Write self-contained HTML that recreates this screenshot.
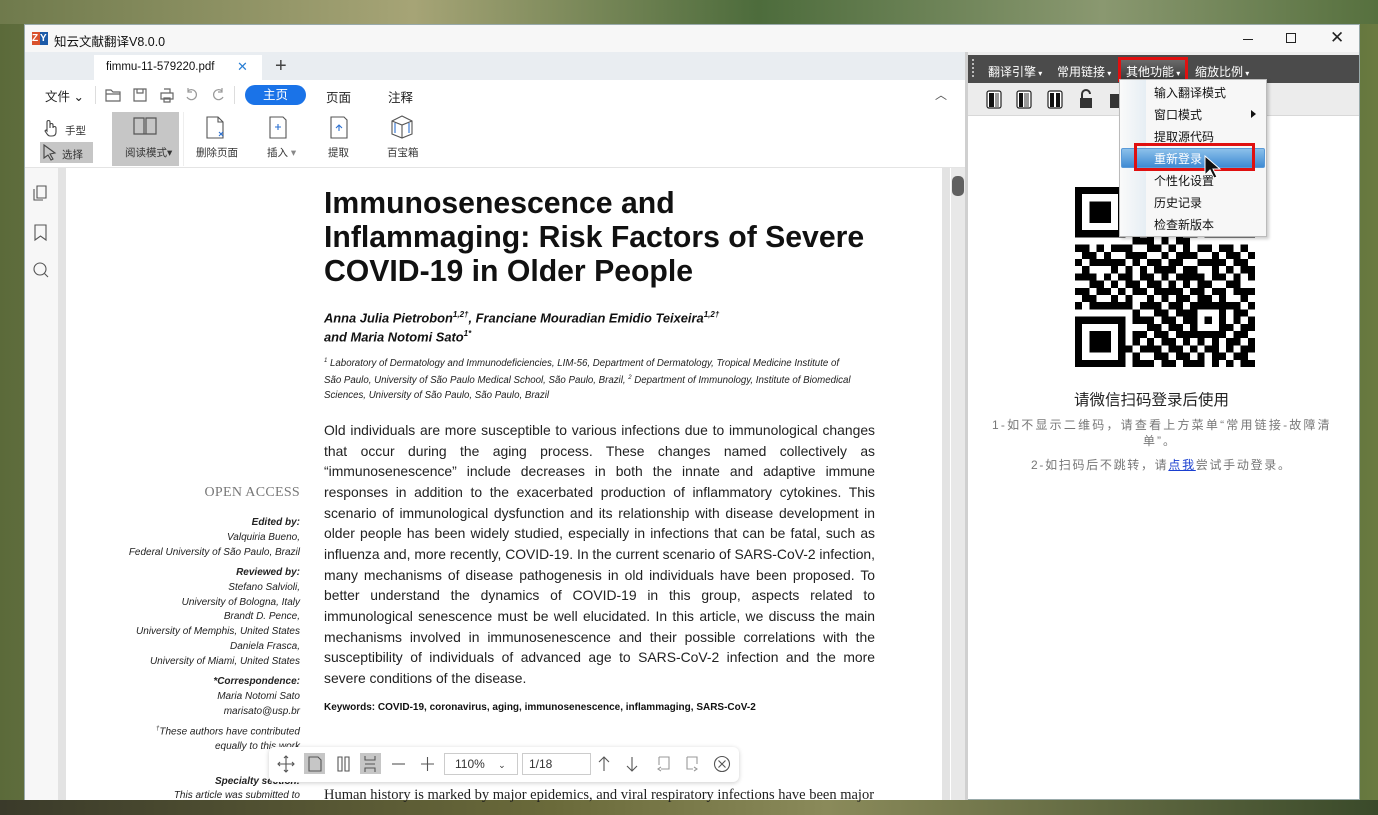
<!DOCTYPE html>
<html><head><meta charset="utf-8">
<style>
*{margin:0;padding:0;box-sizing:border-box}
body{width:1378px;height:815px;overflow:hidden;position:relative;font-family:"Liberation Sans","Noto Sans CJK SC",sans-serif;background:linear-gradient(90deg,#5b6a3a 0%,#8a8f5a 20%,#3d5a2e 45%,#7a8a4a 70%,#4a6a35 90%,#6a7a40 100%)}
.a{position:absolute}
.win{left:24px;top:24px;width:1336px;height:776px;background:#fff;border:1px solid #9aa}
.t{white-space:nowrap}
.body p{position:absolute;left:324px;width:551px;font-size:13.9px;color:#222;text-align:justify;text-align-last:justify;white-space:nowrap}
.side{position:absolute;right:1078px;font-size:10px;font-style:italic;color:#222;text-align:right;white-space:nowrap}
.menu div{position:absolute;left:1154px;font-size:12px;color:#111}
svg{position:absolute}
</style></head><body>
<div class="a" style="left:0;top:0;width:1378px;height:24px;background:linear-gradient(90deg,#6f7a4c,#a6a476 30%,#4d6c3c 55%,#8a9870 80%,#56703e)"></div>
<div class="a" style="left:0;top:800px;width:1378px;height:15px;background:linear-gradient(90deg,#3a3a2a,#6a6a3a 40%,#8a8a5a 60%,#3a4a2a)"></div>
<div class="a win"></div>
<div class="a" style="left:25px;top:25px;width:1334px;height:27px;background:#f7f7f7"></div>
<div class="a" style="left:32px;top:32px;width:8px;height:13px;background:#d9512c;color:#fff;font-size:10px;font-weight:bold;line-height:13px">Z</div>
<div class="a" style="left:40px;top:32px;width:8px;height:13px;background:#1b5aa8;color:#fff;font-size:10px;font-weight:bold;line-height:13px">Y</div>
<div class="a t" style="left:54px;top:31px;font-size:12.5px;color:#111">知云文献翻译V8.0.0</div>
<div class="a" style="left:1243px;top:39px;width:10px;height:1px;background:#222"></div>
<div class="a" style="left:1286px;top:33px;width:10px;height:10px;border:1px solid #222"></div>
<div class="a t" style="left:1330px;top:28px;font-size:17px;color:#222">✕</div>
<div class="a" style="left:25px;top:52px;width:940px;height:28px;background:#e9edf1"></div>
<div class="a" style="left:94px;top:55px;width:168px;height:25px;background:#fff"></div>
<div class="a t" style="left:106px;top:61px;font-size:11.5px;color:#111">fimmu-11-579220.pdf</div>
<div class="a t" style="left:237px;top:59px;font-size:13px;color:#2a7fd4">✕</div>
<div class="a t" style="left:275px;top:55px;font-size:20px;color:#444">+</div>
<div class="a t" style="left:45px;top:86px;font-size:12.5px;color:#222">文件 ⌄</div>
<div class="a" style="left:95px;top:86px;width:1px;height:18px;background:#ddd"></div>
<svg style="left:104px;top:86px" width="125" height="18" fill="none" stroke="#666" stroke-width="1.2">
<path d="M2 4h5l2 2h7v9H2z M2 8h14"/><path d="M30 3h12v12H30z M33 3v4h6V3"/><path d="M57 7h12v6H57z M60 3h6v4 M60 12h6v4h-6z"/><path d="M84 5a5 5 0 1 1 -1 6 M84 2v4h4" stroke="#999"/><path d="M118 5a5 5 0 1 0 1 6 M118 2v4h-4" stroke="#999"/></svg>
<div class="a" style="left:234px;top:86px;width:1px;height:18px;background:#ddd"></div>
<div class="a t" style="left:245px;top:85px;width:61px;height:20px;border-radius:10px;background:#1a73e8;color:#fff;font-size:12.5px;text-align:center;line-height:20px">主页</div>
<div class="a t" style="left:326px;top:87px;font-size:12.5px;color:#222">页面</div>
<div class="a t" style="left:388px;top:87px;font-size:12.5px;color:#222">注释</div>
<div class="a t" style="left:935px;top:86px;font-size:12px;color:#555">︿</div>
<svg style="left:42px;top:119px" width="18" height="18" fill="none" stroke="#444" stroke-width="1.1"><path d="M5 9V3a1.5 1.5 0 0 1 3 0v6V6a1.5 1.5 0 0 1 3 0v3a1.5 1.5 0 0 1 3 0v4c0 3-2 4-4 4H8c-2 0-3-2-5-5l1-1 1 1z"/></svg>
<div class="a t" style="left:65px;top:123px;font-size:10.5px;color:#333">手型</div>
<div class="a" style="left:40px;top:142px;width:53px;height:21px;background:#c6c6c6"></div>
<svg style="left:42px;top:144px" width="16" height="17" fill="none" stroke="#444" stroke-width="1.1"><path d="M2 1l11 8-5 1 3 5-2 1-3-5-4 3z"/></svg>
<div class="a t" style="left:62px;top:147px;font-size:10.5px;color:#333">选择</div>
<div class="a" style="left:112px;top:112px;width:67px;height:54px;background:#c6c6c6"></div>
<svg style="left:133px;top:116px" width="24" height="22" fill="none" stroke="#555" stroke-width="1.2"><path d="M1 2h10v16H1z M13 2h10v16H13z M11 18h2"/></svg>
<div class="a t" style="left:125px;top:145px;font-size:10.5px;color:#333">阅读模式▾</div>
<div class="a" style="left:183px;top:112px;width:1px;height:54px;background:#eee"></div>
<svg style="left:205px;top:116px" width="22" height="24" fill="none" stroke="#555" stroke-width="1.1"><path d="M2 1h11l5 5v16H2z M13 1v5h5"/><path d="M14 16l4 4M18 16l-4 4" stroke="#2a6fd0"/></svg>
<div class="a t" style="left:196px;top:145px;font-size:10.5px;color:#333">删除页面</div>
<svg style="left:268px;top:116px" width="22" height="24" fill="none" stroke="#555" stroke-width="1.1"><path d="M2 1h13l3 3v18H2z"/><path d="M10 8v6M7 11h6" stroke="#2a6fd0"/></svg>
<div class="a t" style="left:267px;top:145px;font-size:10.5px;color:#333">插入 <span style="color:#888">▾</span></div>
<svg style="left:329px;top:116px" width="22" height="24" fill="none" stroke="#555" stroke-width="1.1"><path d="M2 1h13l3 3v18H2z"/><path d="M10 15V9M7 12l3-3 3 3" stroke="#2a6fd0"/></svg>
<div class="a t" style="left:328px;top:145px;font-size:10.5px;color:#333">提取</div>
<svg style="left:389px;top:114px" width="26" height="26" fill="none" stroke="#555" stroke-width="1.1"><path d="M3 7l10-5 10 5v13l-10 4-10-4z M3 7l10 4 10-4 M13 11v13"/><path d="M6 9v10M20 9v10" stroke="#2a6fd0"/></svg>
<div class="a t" style="left:387px;top:145px;font-size:10.5px;color:#333">百宝箱</div>
<div class="a" style="left:25px;top:167px;width:940px;height:1px;background:#e4e4e4"></div>
<div class="a" style="left:25px;top:168px;width:33px;height:632px;background:#f7f7f7"></div>
<svg style="left:32px;top:185px" width="18" height="100" fill="none" stroke="#555" stroke-width="1.1"><path d="M5 1h9v12H5z M2 4v11h9"/><path d="M3 40h11v15l-5.5-4-5.5 4z"/><circle cx="8" cy="84" r="6"/><path d="M12.5 88.5l3.5 3.5"/></svg>
<div class="a" style="left:58px;top:168px;width:892px;height:632px;background:#e3e3e3"></div>
<div class="a" style="left:66px;top:168px;width:876px;height:632px;background:#fff"></div>
<div class="a" style="left:950px;top:168px;width:15px;height:632px;background:#e8e8e8;border-left:1px solid #fff"></div>
<div class="a" style="left:952px;top:176px;width:12px;height:20px;background:#606060;border-radius:5px"></div>
<div class="a" style="left:965px;top:52px;width:3px;height:748px;background:#d0d0d0"></div>
<div class="a" style="left:324px;top:187px;font-size:30.2px;font-weight:bold;line-height:34px;color:#111;white-space:nowrap">Immunosenescence and<br>Inflammaging: Risk Factors of Severe<br>COVID-19 in Older People</div>
<div class="a t" style="left:324px;top:307px;font-size:12.9px;font-weight:bold;font-style:italic;line-height:16px;color:#111">Anna Julia Pietrobon<sup style="font-size:8px">1,2†</sup>, Franciane Mouradian Emidio Teixeira<sup style="font-size:8px">1,2†</sup><br>and Maria Notomi Sato<sup style="font-size:8px">1*</sup></div>
<div class="a t" style="left:324px;top:354px;font-size:9.7px;font-style:italic;line-height:15px;color:#222"><sup style="font-size:6px">1</sup> Laboratory of Dermatology and Immunodeficiencies, LIM-56, Department of Dermatology, Tropical Medicine Institute of<br>São Paulo, University of São Paulo Medical School, São Paulo, Brazil, <sup style="font-size:6px">2</sup> Department of Immunology, Institute of Biomedical<br>Sciences, University of São Paulo, São Paulo, Brazil</div>
<div class="body">
<p style="top:422px">Old individuals are more susceptible to various infections due to immunological changes</p>
<p style="top:443px">that occur during the aging process. These changes named collectively as</p>
<p style="top:463px">“immunosenescence” include decreases in both the innate and adaptive immune</p>
<p style="top:484px">responses in addition to the exacerbated production of inflammatory cytokines. This</p>
<p style="top:505px">scenario of immunological dysfunction and its relationship with disease development in</p>
<p style="top:525px">older people has been widely studied, especially in infections that can be fatal, such as</p>
<p style="top:546px">influenza and, more recently, COVID-19. In the current scenario of SARS-CoV-2 infection,</p>
<p style="top:567px">many mechanisms of disease pathogenesis in old individuals have been proposed. To</p>
<p style="top:587px">better understand the dynamics of COVID-19 in this group, aspects related to</p>
<p style="top:608px">immunological senescence must be well elucidated. In this article, we discuss the main</p>
<p style="top:629px">mechanisms involved in immunosenescence and their possible correlations with the</p>
<p style="top:649px">susceptibility of individuals of advanced age to SARS-CoV-2 infection and the more</p>
<p style="top:670px;text-align-last:left">severe conditions of the disease.</p>
</div>
<div class="a t" style="left:324px;top:702px;font-size:10px;font-weight:bold;color:#111">Keywords: COVID-19, coronavirus, aging, immunosenescence, inflammaging, SARS-CoV-2</div>
<div class="a t" style="left:324px;top:787px;font-size:14.5px;font-family:'Liberation Serif',serif;color:#222">Human history is marked by major epidemics, and viral respiratory infections have been major</div>
<div class="a t" style="right:1078px;top:485px;font-size:14px;font-family:'Liberation Serif',serif;color:#777;letter-spacing:0.3px">OPEN ACCESS</div>
<div class="side" style="top:517px;font-weight:bold">Edited by:</div>
<div class="side" style="top:532px">Valquiria Bueno,</div>
<div class="side" style="top:547px">Federal University of São Paulo, Brazil</div>
<div class="side" style="top:567px;font-weight:bold">Reviewed by:</div>
<div class="side" style="top:582px">Stefano Salvioli,</div>
<div class="side" style="top:597px">University of Bologna, Italy</div>
<div class="side" style="top:611px">Brandt D. Pence,</div>
<div class="side" style="top:626px">University of Memphis, United States</div>
<div class="side" style="top:641px">Daniela Frasca,</div>
<div class="side" style="top:656px">University of Miami, United States</div>
<div class="side" style="top:676px;font-weight:bold">*Correspondence:</div>
<div class="side" style="top:691px">Maria Notomi Sato</div>
<div class="side" style="top:706px">marisato@usp.br</div>
<div class="side" style="top:726px"><sup style="font-size:6px">†</sup>These authors have contributed</div>
<div class="side" style="top:741px">equally to this work</div>
<div class="side" style="top:776px;font-weight:bold">Specialty section:</div>
<div class="side" style="top:790px">This article was submitted to</div>
<div class="a" style="left:269px;top:747px;width:470px;height:35px;background:#fff;border-radius:6px;box-shadow:0 1px 5px rgba(0,0,0,.2)"></div>
<div class="a" style="left:304px;top:753px;width:21px;height:21px;background:#c6c6c6"></div>
<div class="a" style="left:360px;top:753px;width:21px;height:21px;background:#c6c6c6"></div>
<svg style="left:275px;top:753px" width="460" height="22" fill="none" stroke="#555" stroke-width="1.1">
<path d="M11 3v16M3 11h16M9 5l2-2 2 2M9 17l2 2 2-2M5 9l-2 2 2 2M17 9l2 2-2 2"/>
<path d="M34 4h9l3 3v11H34z"/>
<path d="M63 4h4v14h-4zM70 4h4v14h-4z"/>
<path d="M90 3v4h10V3M90 19v-4h10v4M90 11h10"/>
<path d="M117 11h13"/><path d="M146 11h13M152.5 4v14"/>
<path d="M329 18V4M324 9l5-5 5 5M357 4v14M352 13l5 5 5-5"/>
<path d="M384 4h10v12h-8 M384 4v8M386 14l-3 2 3 2" stroke="#999"/>
<path d="M412 4h10v7M412 4v12h6M419 14l3 2-3 2" stroke="#999"/>
<circle cx="447" cy="11" r="7.5"/><path d="M443.5 7.5l7 7M450.5 7.5l-7 7"/></svg>
<div class="a t" style="left:444px;top:753px;width:74px;height:22px;border:1px solid #ccc;font-size:12px;color:#333;line-height:20px;padding-left:10px">110% <span style="font-size:9px;margin-left:10px">⌄</span></div>
<div class="a t" style="left:522px;top:753px;width:69px;height:22px;border:1px solid #ccc;font-size:12px;color:#333;line-height:20px;padding-left:6px">1/18</div>
<div class="a" style="left:968px;top:52px;width:391px;height:3px;background:#eee"></div>
<div class="a" style="left:968px;top:55px;width:391px;height:28px;background:#4b4b4b"></div>
<div class="a" style="left:972px;top:59px;width:2px;height:18px;border-left:2px dotted #bbb"></div>
<div class="a t" style="left:988px;top:63px;font-size:12px;color:#fff">翻译引擎<span style="font-size:8px"> ▾</span></div>
<div class="a t" style="left:1057px;top:63px;font-size:12px;color:#fff">常用链接<span style="font-size:8px"> ▾</span></div>
<div class="a" style="left:1118px;top:57px;width:70px;height:25px;background:linear-gradient(#6a6a6a,#3a3a3a);border:3px solid #e01010"></div>
<div class="a t" style="left:1126px;top:63px;font-size:12px;color:#fff">其他功能<span style="font-size:8px"> ▾</span></div>
<div class="a t" style="left:1195px;top:63px;font-size:12px;color:#fff">缩放比例<span style="font-size:8px"> ▾</span></div>
<div class="a" style="left:968px;top:83px;width:391px;height:33px;background:#ececec;border-bottom:1px solid #d8d8d8"></div>
<svg style="left:985px;top:88px" width="140" height="24"><g fill="#fff" stroke="#222" stroke-width="1.2"><rect x="2" y="3" width="14" height="17" rx="2"/><rect x="32" y="3" width="14" height="17" rx="2"/><rect x="63" y="3" width="14" height="17" rx="2"/></g><rect x="4" y="5" width="5" height="14" fill="#111"/><rect x="10" y="5" width="4" height="14" fill="#999"/><rect x="34" y="5" width="4" height="14" fill="#111"/><rect x="39" y="5" width="5" height="14" fill="#999"/><rect x="65" y="5" width="4" height="14" fill="#111"/><rect x="71" y="5" width="4" height="14" fill="#111"/><path d="M97 10V6a4 4 0 0 1 8 0" fill="none" stroke="#333" stroke-width="2"/><rect x="95" y="10" width="12" height="10" fill="#333"/><rect x="125" y="6" width="12" height="14" fill="#333"/></svg>
<svg id="qr" style="left:1075px;top:187px" width="180" height="180" viewBox="0 0 25 25" shape-rendering="crispEdges"></svg>
<div class="a t" style="left:1074px;top:388px;font-size:15.5px;color:#222">请微信扫码登录后使用</div>
<div class="a t" style="left:992px;top:416px;font-size:12px;color:#777;letter-spacing:2.2px">1-如不显示二维码，请查看上方菜单“常用链接-故障清</div>
<div class="a t" style="left:1143px;top:432px;font-size:12px;color:#777;letter-spacing:2px">单”。</div>
<div class="a t" style="left:1031px;top:456px;font-size:12px;color:#777;letter-spacing:1.7px">2-如扫码后不跳转，请<span style="color:#1a3fd0;text-decoration:underline">点我</span>尝试手动登录。</div>
<div class="a" style="left:1119px;top:79px;width:148px;height:158px;background:#f7f7f7;border:1px solid #bbb;box-shadow:2px 2px 3px rgba(0,0,0,.2)"></div>
<div class="a" style="left:1120px;top:80px;width:26px;height:156px;background:linear-gradient(90deg,#fafafa,#e6eef4)"></div>
<div class="a" style="left:1121px;top:148px;width:144px;height:20px;background:linear-gradient(#8cc0ea,#3f8ad3);border:1px solid #5a9ad8;border-radius:2px"></div>
<div class="menu">
<div style="top:84px">输入翻译模式</div>
<div style="top:106px">窗口模式</div>
<div style="top:128px">提取源代码</div>
<div style="top:150px;color:#fff">重新登录</div>
<div style="top:172px">个性化设置</div>
<div style="top:194px">历史记录</div>
<div style="top:216px">检查新版本</div>
</div>
<div class="a" style="left:1251px;top:110px;width:0;height:0;border-left:5px solid #111;border-top:4px solid transparent;border-bottom:4px solid transparent"></div>
<div class="a" style="left:1134px;top:143px;width:121px;height:28px;border:3px solid #e01010"></div>
<svg style="left:1204px;top:155px" width="20" height="26"><path d="M1 1v19l5-5 4 8 3-1-4-8h7z" fill="#111" stroke="#fff" stroke-width="1"/></svg>
<script>
var rows=["1111111010110101101111111","1000001011001110101000001","1011101001111010101011101","1011101110100101001011101","1011101010111011101011101","1000001001010100101000001","1111111010101010101111111","0000000011101011000000000","1101011100110101011011010","0110100111001011100101101","1011111010110110011110110","0100010101011101100101011","1110101101101011110110101","0011010110110101011001100","1101101011011110110110111","0110010100101011011010010","1011111101110110111111101","0000000010011011100010110","1111111011101101101010101","1000001000110110100011011","1011101011011011111110110","1011101010101101010101101","1011101101110110101101011","1000001010011011010110110","1111111011101101110101011"];
var s="";for(var y=0;y<25;y++)for(var x=0;x<25;x++)if(rows[y][x]=="1")s+='<rect x="'+x+'" y="'+y+'" width="1" height="1"/>';
document.getElementById("qr").innerHTML=s;
</script>
</body></html>
